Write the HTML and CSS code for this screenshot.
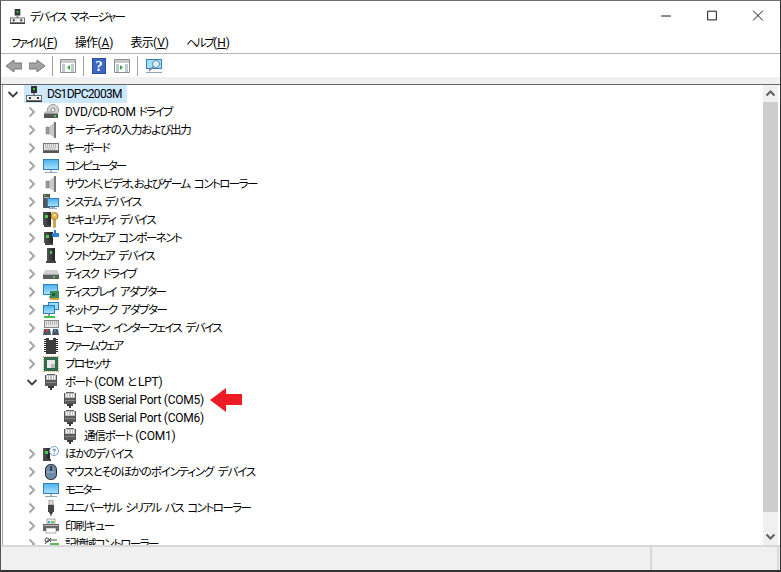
FILE: index.html
```html
<!DOCTYPE html>
<html lang="ja">
<head>
<meta charset="utf-8">
<title>デバイス マネージャー</title>
<link rel="stylesheet" href="styles.css">
</head>
<body>
<svg class="defs" width="0" height="0" aria-hidden="true">
  <defs>
    <linearGradient id="scr" x1="0" y1="0" x2="0" y2="1"><stop offset="0" stop-color="#4fb4ec"/><stop offset="1" stop-color="#a9e0fb"/></linearGradient>
    <linearGradient id="tower" x1="0" y1="0" x2="1" y2="0"><stop offset="0" stop-color="#555"/><stop offset="1" stop-color="#222"/></linearGradient>
    <symbol id="pc" viewBox="0 0 16 16">
      <path d="M5 0h6v7H5z" fill="#333"/><path d="M7 2h2v2H7z" fill="#2ecc40"/><path d="M7 7h2v2H7z" fill="#888"/>
      <path d="M0 9h16v6H0z" fill="#6e6e6e"/><path d="M1 10h14v4H1z" fill="#f2f2f2"/><path d="M3 11h2v2H3zM11 11h2v2h-2z" fill="#333"/><path d="M0 15h16v1H0z" fill="#333"/>
    </symbol>
    <symbol id="dvd" viewBox="0 0 16 16">
      <circle cx="10" cy="6" r="5.500" fill="#d8d8d8" stroke="#999"/><circle cx="10" cy="6" r="2" fill="#fff" stroke="#888"/>
      <path d="M1 9l2-2h5l3 2z" fill="#bbb"/><path d="M1 9h14v5H1z" fill="#555"/><path d="M1 9h14v1H1z" fill="#999"/><path d="M11 11h2v2h-2z" fill="#3fd14a"/>
    </symbol>
    <symbol id="spk" viewBox="0 0 16 16">
      <path d="M6 5l6-5v16l-6-4z" fill="#c8c8c8"/><path d="M11 0h2v16h-2z" fill="#777"/><path d="M3 5h3v7H3z" fill="#9a9a9a" stroke="#777" stroke-width=".5"/>
    </symbol>
    <symbol id="kbd" viewBox="0 0 16 16">
      <path d="M0 3h16v10H0z" fill="#777"/><path d="M1 4h14v6H1z" fill="#e6e6e6"/>
      <path d="M2 5h12M2 7h12M3 9h10" stroke="#8a8a8a" stroke-dasharray="1 1"/><path d="M0 11h16v2H0z" fill="#555"/>
    </symbol>
    <symbol id="mon" viewBox="0 0 16 16">
      <path d="M0 1h16v11H0z" fill="#2e7fc0"/><path d="M1 2h14v9H1z" fill="url(#scr)"/><path d="M7 12h2v2H7z" fill="#bbb"/><path d="M2 14h12v1H2z" fill="#8da5b8"/>
    </symbol>
    <symbol id="sys" viewBox="0 0 16 16">
      <path d="M0 0h7v14H0z" fill="#555"/><path d="M1 1h2v1H1z" fill="#3fd14a"/><path d="M1 3h5v1H1z" fill="#bbb"/>
      <path d="M4 4h12v9H4z" fill="#2e7fc0"/><path d="M5 5h10v7H5z" fill="url(#scr)"/><path d="M8 13h4v1H8zM6 14h8v1H6z" fill="#9ab"/>
    </symbol>
    <symbol id="sec" viewBox="0 0 16 16">
      <path d="M0 0h8v13H0z" fill="url(#tower)"/><path d="M2 3h3v3H2z" fill="#3fd14a"/><path d="M1 13h7v2H1z" fill="#444"/>
      <circle cx="11.500" cy="4" r="3.500" fill="#e9b949" stroke="#a87e1e"/><circle cx="11.500" cy="3" r="1" fill="#fff"/><path d="M10.500 7h2v8l-1 1-1-1z" fill="#d9a33a" stroke="#a87e1e" stroke-width=".5"/>
    </symbol>
    <symbol id="swc" viewBox="0 0 16 16">
      <path d="M1 2h9v11H1z" fill="url(#tower)"/><path d="M3 5h3v3H3z" fill="#3fd14a"/><path d="M2 13h8v2H2z" fill="#444"/>
      <path d="M9 3h2V0h2v3h3v4H9z" fill="#2f80d0"/>
    </symbol>
    <symbol id="swd" viewBox="0 0 16 16">
      <path d="M4 0h8v13H4z" fill="url(#tower)"/><path d="M7 3h2v3H7z" fill="#3fd14a"/><path d="M3 13h10v2H3z" fill="#444"/>
    </symbol>
    <symbol id="disk" viewBox="0 0 16 16">
      <path d="M2 4h12l2 4H0z" fill="#d0d0d0"/><path d="M0 8h16v5H0z" fill="#5d5d5d"/><path d="M0 8h16v1H0z" fill="#aaa"/><path d="M10 10h2v2h-2z" fill="#3fd14a"/>
    </symbol>
    <symbol id="gpu" viewBox="0 0 16 16">
      <path d="M0 0h15v11H0z" fill="#2e7fc0"/><path d="M1 1h13v9H1z" fill="url(#scr)"/><path d="M6 12h2v2H6z" fill="#999"/>
      <path d="M7 7h9v7H7z" fill="#3d8a5b"/><path d="M9 9h3v3H9z" fill="#163"/><path d="M7 14h9v2H7z" fill="#d9a33a"/>
    </symbol>
    <symbol id="net" viewBox="0 0 16 16">
      <path d="M5 0h11v8H5z" fill="#2e7fc0"/><path d="M6 1h9v6H6z" fill="#9adcfa"/>
      <path d="M0 3h12v9H0z" fill="#2e7fc0"/><path d="M1 4h10v7H1z" fill="url(#scr)"/>
      <path d="M5 12h2v2H5z" fill="#999"/><path d="M1 14h11v2H1z" fill="#4cc04c"/>
    </symbol>
    <symbol id="hid" viewBox="0 0 16 16">
      <path d="M1 0h15v8H1z" fill="#888"/><path d="M2 1h13v6H2z" fill="#e5e5e5"/><path d="M3 2h11M3 4h11" stroke="#888" stroke-dasharray="1 1"/>
      <path d="M0 15l1-6h6l1 6z" fill="#4a5560"/><path d="M9 15l1-6h5l1 6z" fill="#4a5560"/><path d="M3 9h2v3H3z" fill="#d33"/><path d="M11 9h2v3h-2z" fill="#2f80d0"/>
    </symbol>
    <symbol id="fw" viewBox="0 0 16 16">
      <path d="M3 0h10v16H3z" fill="#3c3c3c"/><path d="M6 0h4v2H6z" fill="#fff"/>
      <path d="M2 1v14M14 1v14" stroke="#222" stroke-width="2" stroke-dasharray="1 1"/>
    </symbol>
    <symbol id="cpu" viewBox="0 0 16 16">
      <path d="M0 0h16v16H0z" fill="none" stroke="#c8962e" stroke-dasharray="1 1" stroke-width="1.400"/>
      <path d="M1 1h14v14H1z" fill="#2f6b50"/><path d="M4 4h8v8H4z" fill="#e9e9e9"/><path d="M8 8h4v4H8z" fill="#bbb"/>
    </symbol>
    <symbol id="port" viewBox="0 0 16 16">
      <path d="M3 1h10v5H3z" fill="#bdbdbd"/><path d="M4 0h8v1H4z" fill="#666"/><path d="M4 2h1v3H4zM6 2h1v3H6zM9 2h1v3H9zM11 2h1v3h-1z" fill="#fff"/>
      <path d="M3 6h10v6H3z" fill="#5a5a5a"/><path d="M2 1h1v11H2zM13 1h1v11h-1z" fill="#555"/><path d="M3 8h10v1H3z" fill="#8a8a8a"/>
      <path d="M5 12h6v2H5z" fill="#3a3a3a"/><path d="M7 14h2v2H7z" fill="#333"/>
    </symbol>
    <symbol id="other" viewBox="0 0 16 16">
      <path d="M0 2h7v11H0z" fill="url(#tower)"/><path d="M2 5h3v3H2z" fill="#3fd14a"/><path d="M0 13h8v2H0z" fill="#444"/>
      <circle cx="11" cy="5" r="4.500" fill="#fff" stroke="#6fa0cc"/><path d="M9.500 3.700q1.500-1.200 3 0 0 1.200-1.500 1.600v1" fill="none" stroke="#4a7cb0"/><path d="M10.600 7.200h1v1h-1z" fill="#4a7cb0"/>
    </symbol>
    <symbol id="mouse" viewBox="0 0 16 16">
      <rect x="2.500" y="0.500" width="11" height="15" rx="5" fill="#6c8bab" stroke="#222"/><path d="M4 8h8" stroke="#9db5cc"/><path d="M7 2h2v5H7z" fill="#33404c"/>
    </symbol>
    <symbol id="usb" viewBox="0 0 16 16">
      <path d="M6 0h4v5H6z" fill="#ddd" stroke="#666" stroke-width=".6"/><path d="M5 5h6v7H5z" fill="#454545"/><path d="M6 12h4l-1 2H7z" fill="#333"/><path d="M7.500 14h1v2h-1z" fill="#333"/>
    </symbol>
    <symbol id="prn" viewBox="0 0 16 16">
      <path d="M4 1h8v5H4z" fill="#f4f4f4" stroke="#777" stroke-width=".6"/><path d="M5 3h2v2H5z" fill="#3fa0e0"/><path d="M8 3h3v2H8z" fill="#5cc35c"/>
      <path d="M0 6h16v7H0z" fill="#666"/><path d="M1 7h14v1H1z" fill="#bbb"/><path d="M3 10h10v5H3z" fill="#fff" stroke="#777" stroke-width=".6"/>
    </symbol>
    <symbol id="stor" viewBox="0 0 16 16">
      <circle cx="4" cy="4" r="2" fill="none" stroke="#444"/><path d="M6 4h8M2 8l3-4M8 2l-2 2 2 2" stroke="#444" fill="none"/>
      <path d="M7 7h9v4H7z" fill="#5cb85c"/><path d="M7 11h9v2H7z" fill="#777"/>
    </symbol>
    <symbol id="chev-r" viewBox="0 0 16 16"><path d="M5.500 3.500L10 8l-4.500 4.500" fill="none" stroke="#a6a6a6" stroke-width="2"/></symbol>
    <symbol id="chev-d" viewBox="0 0 16 16"><path d="M3.500 6L8 10.500 12.500 6" fill="none" stroke="#404040" stroke-width="1.800"/></symbol>
    <symbol id="panel" viewBox="0 0 16 16">
      <path d="M.5 1.500h15v13H.5z" fill="#fff" stroke="#8e8e8e"/><path d="M1 2h14v3H1z" fill="#c9c9c9"/>
      <path d="M2 7h3M2 9h3M2 11h3M2 13h3M11 7h3M11 9h3M11 11h3M11 13h3" stroke="#7f97a8"/>
    </symbol>
  </defs>
</svg>

<main class="window">
  <header class="titlebar">
    <svg class="title-icon"><use href="#pc"/></svg>
    <span class="title-text ja">デバイス マネージャー</span>
    <div class="controls">
      <svg class="ctl" viewBox="0 0 46 32"><path d="M18 15.500h10" stroke="#111" fill="none"/></svg>
      <svg class="ctl" viewBox="0 0 46 32"><path d="M18.500 10.500h9v9h-9z" stroke="#111" fill="none"/></svg>
      <svg class="ctl" viewBox="0 0 46 32"><path d="M18 10l10 10M28 10L18 20" stroke="#111" fill="none"/></svg>
    </div>
  </header>

  <nav class="menubar">
    <span class="menu"><span class="ja tight">ファイル</span>(<u>F</u>)</span>
    <span class="menu"><span class="ja kanji">操作</span>(<u>A</u>)</span>
    <span class="menu"><span class="ja kanji">表示</span>(<u>V</u>)</span>
    <span class="menu"><span class="ja tight">ヘルプ</span>(<u>H</u>)</span>
  </nav>

  <div class="toolbar">
    <svg class="tool" viewBox="0 0 16 16"><path d="M8 2L0 8l8 6v-3h8V5H8z" fill="#a3a3a3" stroke="#777"/></svg>
    <svg class="tool" viewBox="0 0 16 16"><path d="M8 2l8 6-8 6v-3H0V5h8z" fill="#a3a3a3" stroke="#777"/></svg>
    <i class="sep"></i>
    <svg class="tool" viewBox="0 0 16 16"><use href="#panel"/><path d="M10 7v5L7 9.500z" fill="#2eaa2e"/></svg>
    <i class="sep"></i>
    <svg class="tool tool-help" viewBox="0 0 14 16"><path d="M0 0h14v16H0z" fill="#2b4fa8"/><path d="M1 1h12v14H1z" fill="#3b66c4"/><text class="help-q" x="7" y="13" text-anchor="middle">?</text></svg>
    <svg class="tool" viewBox="0 0 16 16"><use href="#panel"/><path d="M6 7v5l3-2.500z" fill="#2eaa2e"/></svg>
    <i class="sep"></i>
    <svg class="tool tool-last" viewBox="0 0 16 16"><path d="M0 1h16v10H0z" fill="#2e7fc0"/><path d="M1 2h14v8H1z" fill="#a5defa"/><circle cx="10" cy="6" r="3.500" fill="#d8f1fd" stroke="#6b8ba3"/><path d="M7.500 8.500L3 13" stroke="#7a7a7a" stroke-width="1.500"/><path d="M0 14h16v1H0z" fill="#8da5b8"/></svg>
  </div>

  <div class="strip"></div>

  <div class="content">
    <div class="tree">
      <div class="row lv0"><svg class="chev"><use href="#chev-d"/></svg><span class="sel"><svg class="ico"><use href="#pc"/></svg><span class="label root">DS1DPC2003M</span></span></div>
      <div class="row lv1"><svg class="chev"><use href="#chev-r"/></svg><svg class="ico"><use href="#dvd"/></svg><span class="label">DVD/CD-ROM <span class="ja">ドライブ</span></span></div>
      <div class="row lv1"><svg class="chev"><use href="#chev-r"/></svg><svg class="ico"><use href="#spk"/></svg><span class="label ja loose">オーディオの入力および出力</span></div>
      <div class="row lv1"><svg class="chev"><use href="#chev-r"/></svg><svg class="ico"><use href="#kbd"/></svg><span class="label ja tight">キーボード</span></div>
      <div class="row lv1"><svg class="chev"><use href="#chev-r"/></svg><svg class="ico"><use href="#mon"/></svg><span class="label ja tight">コンピューター</span></div>
      <div class="row lv1"><svg class="chev"><use href="#chev-r"/></svg><svg class="ico"><use href="#spk"/></svg><span class="label ja">サウンド、ビデオ、およびゲーム コントローラー</span></div>
      <div class="row lv1"><svg class="chev"><use href="#chev-r"/></svg><svg class="ico"><use href="#sys"/></svg><span class="label ja">システム デバイス</span></div>
      <div class="row lv1"><svg class="chev"><use href="#chev-r"/></svg><svg class="ico"><use href="#sec"/></svg><span class="label ja">セキュリティ デバイス</span></div>
      <div class="row lv1"><svg class="chev"><use href="#chev-r"/></svg><svg class="ico"><use href="#swc"/></svg><span class="label ja">ソフトウェア コンポーネント</span></div>
      <div class="row lv1"><svg class="chev"><use href="#chev-r"/></svg><svg class="ico"><use href="#swd"/></svg><span class="label ja">ソフトウェア デバイス</span></div>
      <div class="row lv1"><svg class="chev"><use href="#chev-r"/></svg><svg class="ico"><use href="#disk"/></svg><span class="label ja">ディスク ドライブ</span></div>
      <div class="row lv1"><svg class="chev"><use href="#chev-r"/></svg><svg class="ico"><use href="#gpu"/></svg><span class="label ja">ディスプレイ アダプター</span></div>
      <div class="row lv1"><svg class="chev"><use href="#chev-r"/></svg><svg class="ico"><use href="#net"/></svg><span class="label ja">ネットワーク アダプター</span></div>
      <div class="row lv1"><svg class="chev"><use href="#chev-r"/></svg><svg class="ico"><use href="#hid"/></svg><span class="label ja">ヒューマン インターフェイス デバイス</span></div>
      <div class="row lv1"><svg class="chev"><use href="#chev-r"/></svg><svg class="ico"><use href="#fw"/></svg><span class="label ja tight">ファームウェア</span></div>
      <div class="row lv1"><svg class="chev"><use href="#chev-r"/></svg><svg class="ico"><use href="#cpu"/></svg><span class="label ja">プロセッサ</span></div>
      <div class="row lv1"><svg class="chev"><use href="#chev-d"/></svg><svg class="ico"><use href="#port"/></svg><span class="label"><span class="ja">ポート</span> (COM <span class="ja">と</span> LPT)</span></div>
      <div class="row lv2"><span class="chev"></span><svg class="ico"><use href="#port"/></svg><span class="label">USB Serial Port (COM5)</span>
        <svg class="callout" viewBox="0 0 32 24"><path d="M0 12L16 0v6h16v11H16v7z" fill="#ed1c24"/></svg></div>
      <div class="row lv2"><span class="chev"></span><svg class="ico"><use href="#port"/></svg><span class="label">USB Serial Port (COM6)</span></div>
      <div class="row lv2"><span class="chev"></span><svg class="ico"><use href="#port"/></svg><span class="label"><span class="ja loose">通信ポート</span> (COM1)</span></div>
      <div class="row lv1"><svg class="chev"><use href="#chev-r"/></svg><svg class="ico"><use href="#other"/></svg><span class="label ja loose">ほかのデバイス</span></div>
      <div class="row lv1"><svg class="chev"><use href="#chev-r"/></svg><svg class="ico"><use href="#mouse"/></svg><span class="label ja loose">マウスとそのほかのポインティング デバイス</span></div>
      <div class="row lv1"><svg class="chev"><use href="#chev-r"/></svg><svg class="ico"><use href="#mon"/></svg><span class="label ja tight">モニター</span></div>
      <div class="row lv1"><svg class="chev"><use href="#chev-r"/></svg><svg class="ico"><use href="#usb"/></svg><span class="label ja">ユニバーサル シリアル バス コントローラー</span></div>
      <div class="row lv1"><svg class="chev"><use href="#chev-r"/></svg><svg class="ico"><use href="#prn"/></svg><span class="label ja loose">印刷キュー</span></div>
      <div class="row lv1"><svg class="chev"><use href="#chev-r"/></svg><svg class="ico"><use href="#stor"/></svg><span class="label ja">記憶域コントローラー</span></div>
    </div>
    <div class="scrollbar">
      <svg class="sb-btn" viewBox="0 0 15 17"><path d="M3.500 10.500L7.500 6.500l4 4" fill="none" stroke="#606060" stroke-width="2"/></svg>
      <div class="sb-track"><div class="sb-thumb"></div></div>
      <svg class="sb-btn" viewBox="0 0 15 17"><path d="M3.500 6.500l4 4 4-4" fill="none" stroke="#606060" stroke-width="2"/></svg>
    </div>
  </div>

  <footer class="statusbar"><div class="st-main"></div><div class="st-side"></div></footer>
</main>
</body>
</html>
```

FILE: styles.css
```css
* { box-sizing: border-box; }
html, body { margin: 0; padding: 0; }
body {
  width: 781px;
  height: 572px;
  overflow: hidden;
  background: #fff;
  font-family: Roboto, "Noto Sans CJK JP", sans-serif;
  font-size: 12px;
  color: #000;
}
.label { letter-spacing: -0.25px; }
.ja { font-size: 11.5px; font-feature-settings: "palt"; letter-spacing: -1.55px; word-spacing: 3px; }
.ja.tight { letter-spacing: -2px; }
.ja.loose { letter-spacing: -1.15px; }
.ja.kanji { font-size: 12px; letter-spacing: -0.7px; }
.defs { position: absolute; }
.window {
  width: 781px;
  height: 572px;
  display: flex;
  flex-direction: column;
  border-top: 1px solid #707070;
  border-left: 1px solid #555;
  border-right: 1px solid #333;
  border-bottom: 2px solid #333;
  background: #fff;
}
.titlebar {
  height: 31px;
  flex: none;
  display: flex;
  align-items: center;
  padding-left: 9px;
}
.title-icon { width: 15px; height: 15px; flex: none; }
.title-text { margin-left: 5px; line-height: 16px; }
.controls { margin-left: auto; display: flex; margin-right: -1px; }
.ctl { width: 46px; height: 31px; display: block; }
.menubar {
  height: 22px;
  flex: none;
  display: flex;
  align-items: center;
  padding-left: 10px;
  gap: 17px;
  border-bottom: 1px solid #b4b4c0;
}
.menu { line-height: 20px; }
.toolbar {
  height: 23px;
  flex: none;
  display: flex;
  align-items: center;
  padding-left: 5px;
  gap: 7px;
}
.tool { width: 16px; height: 16px; flex: none; }
.tool-help { width: 14px; margin-left: 1px; margin-right: 1px; }
.tool-last { margin-left: 1px; }
.help-q { font-family: "Liberation Serif", serif; font-size: 15px; font-weight: 700; fill: #fff; }
.sep { width: 1px; height: 20px; background: #a0a0a0; flex: none; }
.strip {
  height: 8px;
  flex: none;
  background: #f0f0f0;
  border-bottom: 1px solid #696969;
}
.content {
  flex: 1;
  min-height: 0;
  display: flex;
  margin-left: 1px;
  border-left: 1px solid #a0a0a0;
  border-bottom: 1px solid #d8d8d8;
  padding-right: 2px;
}
.tree { flex: 1; min-width: 0; overflow: hidden; }
.row {
  height: 18px;
  display: flex;
  align-items: center;
  white-space: nowrap;
}
.lv0 { padding-left: 2px; }
.lv1 { padding-left: 21px; }
.lv2 { padding-left: 40px; }
.chev { width: 16px; height: 16px; flex: none; display: block; }
.ico { width: 16px; height: 16px; margin-left: 3px; flex: none; display: block; }
.label { margin-left: 6px; padding-right: 3px; line-height: 18px; }
.sel { display: flex; align-items: center; height: 18px; margin-left: 3px; padding-left: 2px; padding-right: 2px; background: #cce8ff; }
.sel .ico { margin-left: 0; }
.sel .label { margin-left: 5px; }
.root { letter-spacing: -0.7px; }
.callout { width: 32px; height: 24px; margin-left: 3px; flex: none; position: relative; z-index: 1; }
.scrollbar {
  width: 15px;
  flex: none;
  display: flex;
  flex-direction: column;
  background: #f0f0f0;
}
.sb-btn { width: 15px; height: 17px; flex: none; display: block; }
.sb-track { flex: 1; min-height: 0; display: flex; flex-direction: column; }
.sb-thumb { height: 410px; background: #cdcdcd; }
.statusbar {
  height: 24px;
  flex: none;
  display: flex;
  background: #f0f0f0;
  border-top: 1px solid #d8d8d8;
}
.st-main { width: 651px; border-right: 2px solid #d9d9d9; }
.st-side { flex: 1; border-right: 2px solid #d9d9d9; margin-right: 1px; }
```
